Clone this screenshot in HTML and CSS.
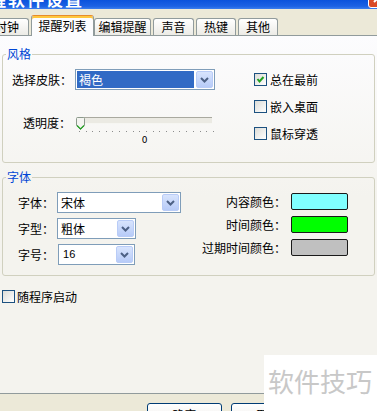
FILE: index.html
```html
<!DOCTYPE html>
<html lang="zh-CN">
<head>
    <meta charset="UTF-8">
    <title>提醒软件设置</title>
    <link rel="stylesheet" href="styles.css">
</head>
<body>
    <div class="window">
        <div class="titlebar">
            <span class="title">提醒软件设置</span>
            <span class="close">
                <svg width="21" height="21" viewBox="0 0 21 21"><path d="M6 6 L15 15 M15 6 L6 15" stroke="#fff" stroke-width="2"/></svg>
            </span>
        </div>

        <div class="tabs">
            <div class="tab tab-clock">时钟</div>
            <div class="tab tab-active">提醒列表</div>
            <div class="tab tab-edit">编辑提醒</div>
            <div class="tab tab-sound">声音</div>
            <div class="tab tab-key">热键</div>
            <div class="tab tab-other">其他</div>
        </div>

        <div class="panel">
            <!-- 风格 -->
            <fieldset class="group">
                <legend>风格</legend>
                <div class="style-body">
                    <div class="style-left">
                        <div class="row row-skin">
                            <span class="label">选择皮肤：</span>
                            <div class="combo combo-skin">
                                <span class="combo-text selected">褐色</span>
                                <span class="drop"><svg width="9" height="6" viewBox="0 0 9 6"><path d="M1 1 L4.5 4.5 L8 1" fill="none" stroke="#4D6185" stroke-width="2"/></svg></span>
                            </div>
                        </div>
                        <div class="row row-alpha">
                            <span class="label">透明度：</span>
                            <div class="slider">
                                <div class="track"></div>
                                <svg class="thumb" width="9" height="13" viewBox="0 0 9 13">
                                    <path d="M0.5 1.5 Q0.5 0.5 1.5 0.5 L7.5 0.5 Q8.5 0.5 8.5 1.5 L8.5 8.5 L4.5 12.5 L0.5 8.5 Z" fill="#F4F4F0" stroke="#8C9A8C"/>
                                    <path d="M1 8.5 L4.5 12 L8 8.5" fill="none" stroke="#21A121" stroke-width="1.2"/>
                                </svg>
                                <div class="ticks"></div>
                                <div class="slider-value">0</div>
                            </div>
                        </div>
                    </div>
                    <div class="style-right">
                        <div class="check">
                            <span class="box"><svg width="11" height="11" viewBox="0 0 11 11"><path d="M2.5 5 L4.5 7.5 L8.5 3" fill="none" stroke="#21A121" stroke-width="2"/></svg></span>
                            <span>总在最前</span>
                        </div>
                        <div class="check">
                            <span class="box"></span>
                            <span>嵌入桌面</span>
                        </div>
                        <div class="check">
                            <span class="box"></span>
                            <span>鼠标穿透</span>
                        </div>
                    </div>
                </div>
            </fieldset>

            <!-- 字体 -->
            <fieldset class="group group-font">
                <legend>字体</legend>
                <div class="font-body">
                    <div class="font-left">
                        <div class="row">
                            <span class="label">字体：</span>
                            <div class="combo combo-face">
                                <span class="combo-text">宋体</span>
                                <span class="drop"><svg width="9" height="6" viewBox="0 0 9 6"><path d="M1 1 L4.5 4.5 L8 1" fill="none" stroke="#4D6185" stroke-width="2"/></svg></span>
                            </div>
                        </div>
                        <div class="row">
                            <span class="label">字型：</span>
                            <div class="combo combo-weight">
                                <span class="combo-text">粗体</span>
                                <span class="drop"><svg width="9" height="6" viewBox="0 0 9 6"><path d="M1 1 L4.5 4.5 L8 1" fill="none" stroke="#4D6185" stroke-width="2"/></svg></span>
                            </div>
                        </div>
                        <div class="row">
                            <span class="label">字号：</span>
                            <div class="combo combo-size">
                                <span class="combo-text num">16</span>
                                <span class="drop"><svg width="9" height="6" viewBox="0 0 9 6"><path d="M1 1 L4.5 4.5 L8 1" fill="none" stroke="#4D6185" stroke-width="2"/></svg></span>
                            </div>
                        </div>
                    </div>
                    <div class="font-right">
                        <div class="color-row">
                            <span class="color-label">内容颜色：</span>
                            <span class="swatch swatch-text"></span>
                        </div>
                        <div class="color-row">
                            <span class="color-label">时间颜色：</span>
                            <span class="swatch swatch-time"></span>
                        </div>
                        <div class="color-row">
                            <span class="color-label">过期时间颜色：</span>
                            <span class="swatch swatch-expired"></span>
                        </div>
                    </div>
                </div>
            </fieldset>

            <div class="check check-start">
                <span class="box"></span>
                <span>随程序启动</span>
            </div>
        </div>

        <div class="footer">
            <div class="btn">确定</div>
            <div class="btn">取消</div>
        </div>

        <div class="watermark">软件技巧</div>
    </div>
</body>
</html>
```

FILE: styles.css
```css
*{
    margin: 0;
    padding: 0;
    box-sizing: border-box;
}
body{
    width: 377px;
    height: 411px;
    overflow: hidden;
    background: #ECE9D8;
    font-family: "Noto Sans CJK SC", sans-serif;
    font-size: 12px;
    color: #000;
}
.window{
    width: 377px;
    height: 411px;
    position: relative;
    overflow: hidden;
}

/* 标题栏 */
.titlebar{
    height: 9px;
    display: flex;
    justify-content: space-between;
    overflow: hidden;
    background: linear-gradient(#0A52DC, #1C62E4 70%, #3C7FEE);
}
.title{
    margin-left: -30px;
    margin-top: -10px;
    font-size: 17px;
    line-height: 17px;
    letter-spacing: 2px;
    font-weight: bold;
    color: #fff;
    white-space: nowrap;
}
.close{
    flex: none;
    width: 21px;
    height: 21px;
    margin-top: -13px;
    margin-right: -12px;
    background: #DA4A26;
    border: 1px solid #fff;
    border-radius: 3px;
}
.close svg{
    display: block;
    margin: -1px;
}

/* 选项卡 */
.tabs{
    height: 26px;
    display: flex;
    align-items: flex-end;
}
.tab{
    height: 17px;
    line-height: 16px;
    text-align: center;
    border: 1px solid #919B9C;
    border-bottom: none;
    border-radius: 3px 3px 0 0;
    background: linear-gradient(#FFFFFF, #ECEBE6);
    white-space: nowrap;
}
.tab-clock{
    width: 44px;
    margin-left: -15px;
}
.tab-active{
    width: 63px;
    height: 21px;
    line-height: 19px;
    margin-left: 2px;
    margin-bottom: -1px;
    position: relative;
    z-index: 1;
    background: #FCFCFE;
    border-top: 1px solid #E68B2C;
    box-shadow: inset 0 2px 0 #FFC73C;
}
.tab-edit{
    width: 57px;
    margin-left: 0;
}
.tab-sound{
    width: 41px;
    margin-left: 2px;
}
.tab-key{
    width: 40px;
    margin-left: 2px;
}
.tab-other{
    width: 40px;
    margin-left: 2px;
}

/* 面板 */
.panel{
    height: 359px;
    border-top: 1px solid #919B9C;
    border-bottom: 1px solid #919B9C;
    background: linear-gradient(#FCFCFE, #F4F3EE 45%);
    padding-top: 12px;
}
.group{
    margin: 0 2px;
    border: 1px solid #D0D0BF;
    border-radius: 3px;
}
.group legend{
    margin-left: 3px;
    padding: 0 1px;
    line-height: 12px;
    color: #0046D5;
}
.group-font{
    margin-top: 8px;
}

.style-body{
    height: 102px;
    display: flex;
}
.style-left{
    width: 251px;
    padding-left: 9px;
}
.row{
    display: flex;
    align-items: center;
}
.label{
    line-height: 12px;
    white-space: nowrap;
    margin-right: 3px;
}
.row-skin{
    margin-top: 9px;
}
.row-alpha{
    margin-top: 27px;
    padding-left: 11px;
    align-items: flex-start;
}
.row-alpha .label{
    margin-right: 5px;
}

/* 下拉框 */
.combo{
    height: 21px;
    display: flex;
    padding: 1px;
    border: 1px solid #7F9DB9;
    background: #fff;
}
.combo-text{
    flex: 1;
    line-height: 17px;
    padding-left: 2px;
}
.combo-text.selected{
    margin-right: 2px;
    background: #316AC5;
    color: #fff;
}
.combo-text.num{
    font-family: "Liberation Sans", sans-serif;
    font-size: 11px;
    padding-left: 3px;
}
.drop{
    width: 17px;
    height: 17px;
    display: flex;
    align-items: center;
    justify-content: center;
    border: 1px solid #B9CCF7;
    border-radius: 2px;
    background: linear-gradient(#D8E4FD, #B7CBF8);
}
.combo-skin{
    width: 140px;
}
.combo-face{
    width: 124px;
}
.combo-weight{
    width: 79px;
}
.combo-size{
    width: 77px;
    margin-left: 1px;
}

/* 滑块 */
.slider{
    width: 137px;
    position: relative;
}
.track{
    width: 135px;
    height: 7px;
    margin-left: 1px;
    background: #EBEAE3;
    border-top: 1px solid #A9A99F;
    border-left: 1px solid #C0C0B8;
    border-bottom: 1px solid #F6F6F2;
}
.thumb{
    position: absolute;
    left: 0;
    top: 0;
}
.ticks{
    width: 135px;
    height: 1px;
    margin: 7px 0 0 3px;
    background: repeating-linear-gradient(to right, #8C8C8C 0 1px, transparent 1px 6.7px);
}
.slider-value{
    margin-top: 4px;
    text-align: center;
    font-family: "DejaVu Sans", sans-serif;
    font-size: 9px;
    line-height: 9px;
}

/* 复选框 */
.style-right{
    padding-top: 13px;
    display: flex;
    flex-direction: column;
    gap: 14px;
}
.check{
    display: flex;
    align-items: center;
    gap: 3px;
    line-height: 13px;
}
.box{
    width: 13px;
    height: 13px;
    border: 1px solid #1C5180;
    background: linear-gradient(135deg, #DCDCD7, #FFFFFF);
}
.box svg{
    display: block;
}
.check-start{
    margin: 14px 0 0 2px;
    gap: 2px;
}

/* 字体 */
.font-body{
    height: 92px;
    display: flex;
    justify-content: space-between;
}
.font-left{
    padding: 9px 0 0 15px;
    display: flex;
    flex-direction: column;
    gap: 5px;
}
.font-right{
    padding: 10px 26px 0 0;
    display: flex;
    flex-direction: column;
    align-items: flex-end;
    gap: 6px;
}
.color-row{
    display: flex;
    align-items: center;
}
.color-label{
    margin-right: 5px;
    line-height: 17px;
}
.swatch{
    width: 57px;
    height: 17px;
    border: 1px solid #1A1A1A;
    border-radius: 2px;
}
.swatch-text{
    background: #80FFFF;
}
.swatch-time{
    background: #00FF00;
}
.swatch-expired{
    background: #C0C0C0;
}

/* 底部按钮 */
.footer{
    display: flex;
    gap: 9px;
    padding: 9px 0 0 147px;
}
.btn{
    width: 75px;
    height: 23px;
    line-height: 21px;
    text-align: center;
    border: 1px solid #003C74;
    border-radius: 3px;
    background: linear-gradient(#FFFFFF, #ECEBE6);
}

/* 水印 */
.watermark{
    position: absolute;
    right: 0;
    bottom: 0;
    width: 113px;
    height: 56px;
    padding: 13px 0 0 4px;
    background: #fff;
    color: #C8C8C8;
    font-size: 26px;
    line-height: 26px;
    white-space: nowrap;
}
```
